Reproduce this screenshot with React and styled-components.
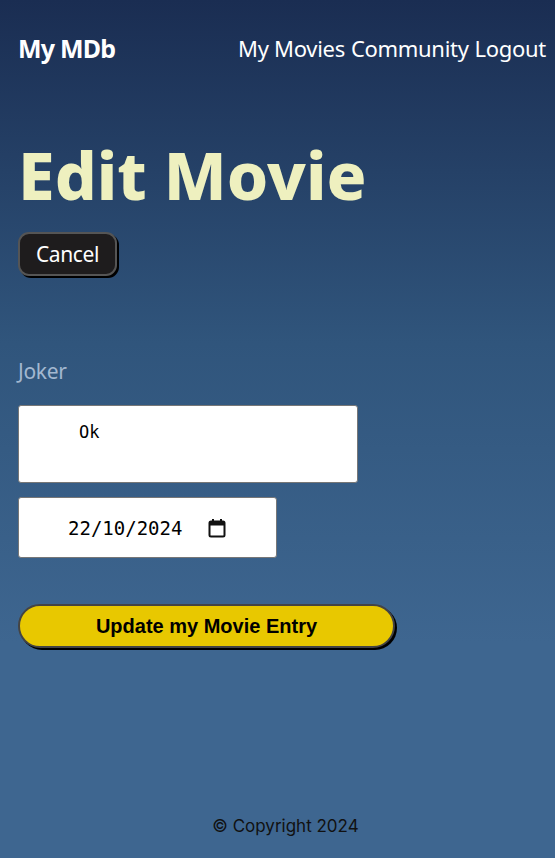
import styled, { createGlobalStyle } from "styled-components"

const GlobalStyle = createGlobalStyle`
  html, body {
    margin: 0;
    padding: 0;
  }
  body {
    font-family: "Noto Sans", sans-serif;
    background: #3e6690;
  }
`

const Page = styled.div`
  min-height: 858px;
  display: flex;
  flex-direction: column;
  background: linear-gradient(to bottom, #1a2d52 0%, #30557c 40%, #3e6690 75%, #3e6690 100%);
  color: #fff;
`

const Header = styled.header`
  display: flex;
  justify-content: space-between;
  align-items: center;
  padding: 29px 9px 0 18px;
  height: 38px;
`

const Logo = styled.div`
  font-family: "Noto Sans", sans-serif;
  font-weight: 700;
  font-size: 25px;
  letter-spacing: -0.8px;
  color: #fff;
`

const Nav = styled.nav`
  display: flex;
  gap: 6px;
`

const NavLink = styled.a`
  font-family: "Noto Sans", sans-serif;
  font-size: 22px;
  letter-spacing: -0.3px;
  color: #fff;
  text-decoration: none;
`

const Main = styled.main`
  flex: 1;
  padding: 0 18px;
`

const Title = styled.h1`
  margin: 69px 0 20px;
  font-family: "Noto Sans", sans-serif;
  font-weight: 800;
  font-size: 66px;
  line-height: 76px;
  color: #eef0bf;
`

const CancelButton = styled.button`
  display: block;
  height: 44px;
  padding: 0 16px;
  background: #1e1c1d;
  color: #fff;
  border: 2px solid #555;
  border-radius: 11px;
  box-shadow: 2px 2px 0 #000;
  font-family: "Noto Sans", sans-serif;
  font-size: 21px;
  letter-spacing: -0.4px;
  cursor: pointer;
`

const Form = styled.form`
  display: flex;
  flex-direction: column;
  align-items: flex-start;
  margin-top: 81px;
`

const Label = styled.label`
  font-family: "Noto Sans", sans-serif;
  font-size: 21px;
  letter-spacing: -0.3px;
  color: #a3b8d0;
  line-height: 28px;
`

const TextArea = styled.textarea`
  box-sizing: border-box;
  width: 340px;
  height: 78px;
  margin-top: 20px;
  padding: 16px 0 0 60px;
  border: 1px solid #777;
  border-radius: 3px;
  background: #fff;
  font-family: "DejaVu Sans Mono", monospace;
  font-size: 17px;
  color: #000;
  resize: none;
`

const DateField = styled.label`
  box-sizing: border-box;
  display: flex;
  align-items: center;
  gap: 24px;
  width: 259px;
  height: 61px;
  margin-top: 14px;
  padding-left: 49px;
  border: 1px solid #777;
  border-radius: 3px;
  background: #fff;
  color: #000;
`

const DateText = styled.input`
  width: 116px;
  padding: 0;
  border: none;
  outline: none;
  background: transparent;
  font-family: "DejaVu Sans Mono", monospace;
  font-size: 19px;
  color: #000;
`

const CalendarIcon = () => (
  <svg width="18" height="20" viewBox="0 0 18 20" fill="none">
    <rect x="1.5" y="3.5" width="15" height="15" rx="1.5" stroke="#111" strokeWidth="2" />
    <rect x="1.5" y="3.5" width="15" height="4" fill="#111" />
    <rect x="4" y="1" width="2" height="3" fill="#111" />
    <rect x="12" y="1" width="2" height="3" fill="#111" />
  </svg>
)

const SubmitButton = styled.button`
  width: 377px;
  height: 44px;
  margin-top: 46px;
  background: #e8c800;
  border: 2px solid #444;
  border-radius: 22px;
  box-shadow: 2px 2px 0 #000;
  font-family: "Liberation Sans", Arial, sans-serif;
  font-weight: 700;
  font-size: 20px;
  color: #000;
  cursor: pointer;
`

const Footer = styled.footer`
  padding: 0 0 22px 16px;
  text-align: center;
  font-family: "Inter", sans-serif;
  font-size: 17px;
  color: #111;
`

export default function App() {
  return (
    <>
      <GlobalStyle />
      <Page>
        <Header>
          <Logo>My MDb</Logo>
          <Nav>
            <NavLink href="#">My Movies</NavLink>
            <NavLink href="#">Community</NavLink>
            <NavLink href="#">Logout</NavLink>
          </Nav>
        </Header>
        <Main>
          <Title>Edit Movie</Title>
          <CancelButton type="button">Cancel</CancelButton>
          <Form onSubmit={(e) => e.preventDefault()}>
            <Label htmlFor="review">Joker</Label>
            <TextArea id="review" defaultValue="Ok" />
            <DateField>
              <DateText type="text" defaultValue="22/10/2024" />
              <CalendarIcon />
            </DateField>
            <SubmitButton type="submit">Update my Movie Entry</SubmitButton>
          </Form>
        </Main>
        <Footer>© Copyright 2024</Footer>
      </Page>
    </>
  )
}
